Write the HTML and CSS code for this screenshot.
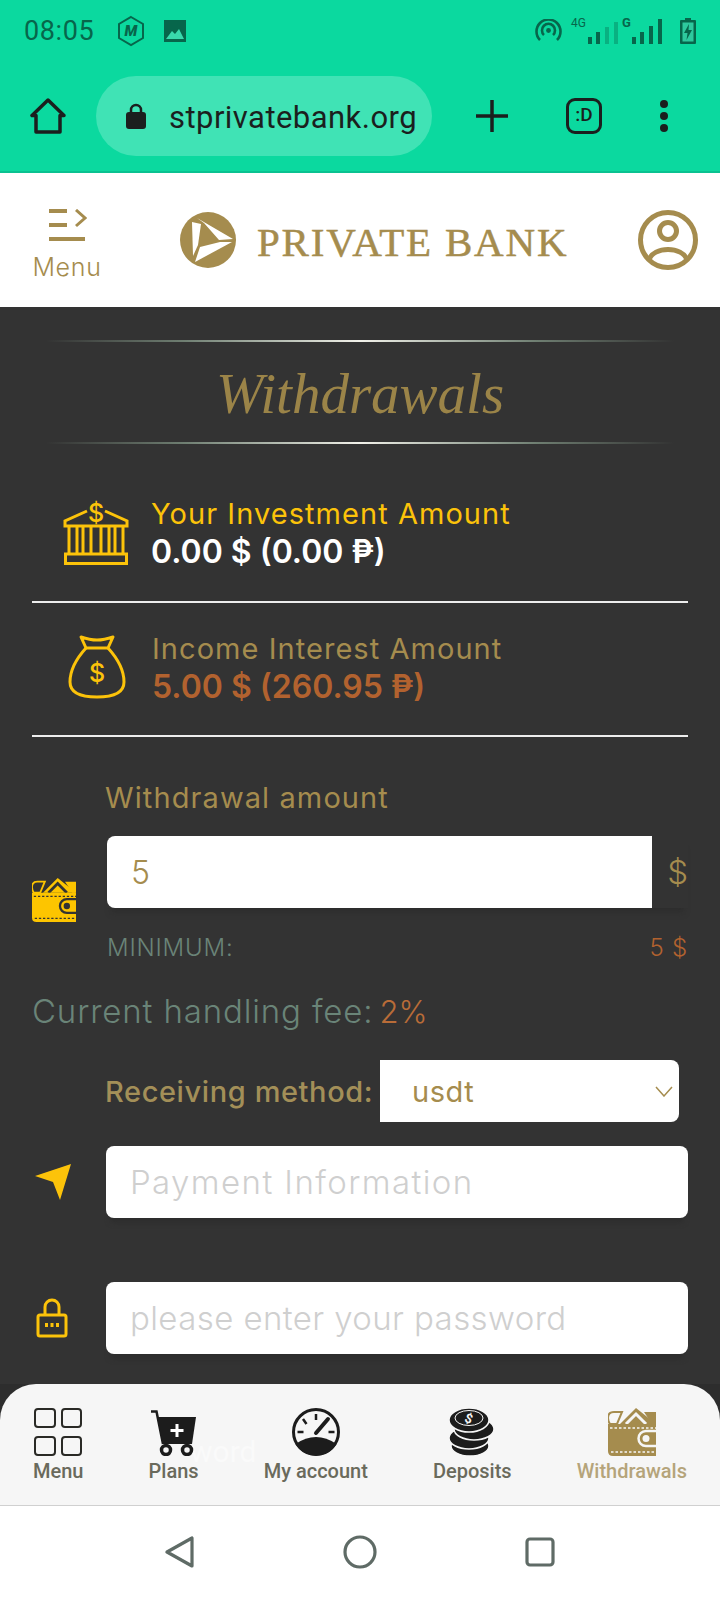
FILE: index.html
```html
<!DOCTYPE html>
<html lang="en">
<head>
    <meta charset="UTF-8">
    <meta name="viewport" content="width=device-width, initial-scale=1.0">
    <title>Withdrawals</title>
    <link rel="stylesheet" href="styles.css">
</head>
<body>
    <svg class="sprite" width="0" height="0">
        <symbol id="wallet" viewBox="0 0 48 48">
            <path d="M2 16 Q0 13 0 10 Q0 4 6 4 H14 L9 16 Z" fill="none" stroke="currentColor" stroke-width="2"/>
            <path d="M12 16 L28 0 L48 16 Z" fill="currentColor"/>
            <path d="M18 16 L28 6 L38 16" fill="none" class="wallet-cut" stroke-width="3"/>
            <path d="M36 4 H48 V16 H44 Z" fill="currentColor"/>
            <path d="M0 16 H48 V48 H5 Q0 48 0 43 Z" fill="currentColor"/>
            <path d="M2 20 H48 M3 44 H48" fill="none" class="wallet-cut" stroke-width="1.5" stroke-dasharray="2.5 2"/>
            <path d="M48 23 H38 A7.5 7.5 0 0 0 38 38 H48" fill="none" class="wallet-cut" stroke-width="2.5"/>
            <circle cx="38" cy="30.5" r="3.5" class="wallet-dot"/>
        </symbol>
    </svg>

    <header class="chrome">
        <div class="status">
            <span class="clock">08:05</span>
            <span class="hex">
                <svg width="28" height="32" viewBox="0 0 28 32"><path d="M14 2 L26 9 V23 L14 30 L2 23 V9 Z" fill="none" stroke="#07664b" stroke-width="2"/></svg>
                <b>M</b>
            </span>
            <svg class="pic" width="22" height="22" viewBox="0 0 22 22"><rect width="22" height="22" fill="#07664b"/><path d="M2 19 L8 11 L11 14 L15 9 L20 19 Z" fill="#39d9ac"/></svg>
            <div class="status-right">
                <svg width="27" height="23" viewBox="0 0 27 23" fill="none" stroke="#07664b" stroke-width="2.6"><path d="M5 21 A12 12 0 1 1 22 21"/><path d="M9 16 A6.5 6.5 0 1 1 18 16"/><circle cx="13.5" cy="11.5" r="2.4" fill="#07664b" stroke="none"/></svg>
                <span class="signal">
                    <i class="net">4G</i>
                    <svg width="34" height="26" viewBox="0 0 34 26" fill="#07664b"><rect x="0" y="18" width="4" height="7"/><rect x="8" y="13" width="4" height="12"/><rect x="17" y="8" width="4" height="17" opacity=".35"/><rect x="26" y="3" width="4" height="22" opacity=".35"/></svg>
                    <i class="net net-g">G</i>
                    <svg width="34" height="26" viewBox="0 0 34 26" fill="#07664b"><rect x="0" y="18" width="4" height="7"/><rect x="8" y="13" width="4" height="12"/><rect x="17" y="7" width="4" height="18"/><rect x="26" y="0" width="4" height="25"/></svg>
                </span>
                <svg width="16" height="26" viewBox="0 0 16 26"><path d="M5 0 H11 V2 H15 Q16 2 16 3 V25 Q16 26 15 26 H1 Q0 26 0 25 V3 Q0 2 1 2 H5 Z" fill="#07664b"/><rect x="2.500" y="4.500" width="11" height="19" fill="#2ec99e"/><path d="M9 6 L4 15 H7.500 L6.500 22 L12 12 H8.500 Z" fill="#07664b"/></svg>
            </div>
        </div>
        <div class="toolbar">
            <svg class="home" width="36" height="36" viewBox="0 0 36 36" fill="none" stroke="#1b1f1e" stroke-width="3.500" stroke-linejoin="round"><path d="M18 2 L2 17.500 H6 V34 H30 V17.500 H34 Z"/></svg>
            <div class="url">
                <svg width="20" height="26" viewBox="0 0 20 26"><path d="M5 10 V7 A5 5 0 0 1 15 7 V10" fill="none" stroke="#1b1f1e" stroke-width="2.500"/><rect y="9" width="20" height="17" rx="3" fill="#1b1f1e"/></svg>
                <span>stprivatebank.org</span>
            </div>
            <svg class="plus" width="32" height="32" viewBox="0 0 32 32" stroke="#1b1f1e" stroke-width="3.500"><path d="M0 16 H32 M16 0 V32"/></svg>
            <span class="tabs">:D</span>
            <svg class="dots" width="10" height="34" viewBox="0 0 10 34" fill="#1b1f1e"><circle cx="5" cy="5" r="4"/><circle cx="5" cy="17" r="4"/><circle cx="5" cy="29" r="4"/></svg>
        </div>
    </header>

    <header class="site-head">
        <div class="menu-btn">
            <svg width="40" height="34" viewBox="0 0 40 34" fill="#a58c4e"><rect x="2" width="18" height="4"/><rect x="2" y="14" width="18" height="4"/><rect x="2" y="28" width="36" height="4"/><path d="M29 1 L38 9 L29 17" fill="none" stroke="#a58c4e" stroke-width="3"/></svg>
            <span>Menu</span>
        </div>
        <div class="logo">
            <svg width="56" height="56" viewBox="0 0 56 56"><circle cx="28" cy="28" r="28" fill="#a58c4e"/><path d="M17 6 L53 27 L39 28 L24 11 Z" fill="#fff"/><path d="M12 10 L21 12 L18 33 L13 44 Z" fill="#fff"/><path d="M15 50 L20 35 L40 30 L52 30 Z" fill="#fff"/></svg>
            <span>PRIVATE BANK</span>
        </div>
        <svg class="user" width="60" height="60" viewBox="0 0 60 60" fill="none" stroke="#a58c4e" stroke-width="5"><circle cx="30" cy="30" r="27.500"/><circle cx="30" cy="21" r="8.500"/><path d="M11 50 C15 36 45 36 49 50"/></svg>
    </header>

    <main class="content">
        <div class="rule"></div>
        <h1 class="title">Withdrawals</h1>
        <div class="rule"></div>

        <section class="stats">
            <div class="stat stat-first">
                <svg class="stat-icon" width="64" height="64" viewBox="0 0 64 64" fill="none" stroke="#fcc30a" stroke-width="3">
                    <path d="M23 10 L1 20 V25 H63 V20 L41 10"/>
                    <path d="M5 25 V53 M13 25 V53 M19 25 V53 M27 25 V53 M37 25 V53 M45 25 V53 M51 25 V53 M59 25 V53"/>
                    <path d="M1.500 53 H62.500 V62.500 H1.500 Z"/>
                    <text x="32" y="21" text-anchor="middle" class="icon-dollar">$</text>
                </svg>
                <div>
                    <p class="stat-label yellow">Your Investment Amount</p>
                    <p class="stat-value white">0.00 $ (0.00 ₱)</p>
                </div>
            </div>
            <div class="stat stat-second">
                <svg class="stat-icon bag" width="58" height="64" viewBox="0 0 58 64" fill="none" stroke="#fcc30a" stroke-width="3" stroke-linejoin="round">
                    <path d="M13 2 Q22 5 29 5 Q36 5 45 2 L40 13 H18 Z"/>
                    <path d="M18 13 C8 24 2 36 2 47 C2 58 12 62 29 62 C46 62 56 58 56 47 C56 36 50 24 40 13"/>
                    <text x="29" y="47" text-anchor="middle" class="icon-dollar">$</text>
                </svg>
                <div>
                    <p class="stat-label gold">Income Interest Amount</p>
                    <p class="stat-value rust">5.00 $ (260.95 ₱)</p>
                </div>
            </div>
        </section>

        <form class="form">
            <label class="field-label" for="amount">Withdrawal amount</label>
            <div class="amount-row">
                <svg class="wallet-small" width="44" height="44"><use href="#wallet"/></svg>
                <div class="amount-box">
                    <input class="amount-input" id="amount" type="text" value="5">
                    <span class="addon">$</span>
                </div>
            </div>
            <div class="min-row">
                <span>MINIMUM:</span>
                <span class="rust">5 $</span>
            </div>
            <p class="fee">Current handling fee: <span class="rust">2%</span></p>
            <div class="method-row">
                <label for="method">Receiving method:</label>
                <div class="select-wrap">
                    <select id="method"><option>usdt</option></select>
                    <svg width="18" height="11" viewBox="0 0 18 11" fill="none" stroke="#a58c4e" stroke-width="1.500"><path d="M1 1 L9 10 L17 1"/></svg>
                </div>
            </div>
            <div class="input-row">
                <span class="input-icon">
                    <svg width="36" height="36" viewBox="0 0 36 36" fill="#fcc30a"><path d="M36 0 L0 12 L18 18 L25 36 Z"/></svg>
                </span>
                <input class="text-input input-payment" type="text" placeholder="Payment Information">
            </div>
            <div class="input-row row-password">
                <span class="input-icon">
                    <svg width="34" height="40" viewBox="0 0 34 40" fill="none" stroke="#fcc30a" stroke-width="3"><path d="M10 17 V9 A7 7 0 0 1 24 9 V17"/><rect x="3" y="17" width="28" height="21" rx="2"/><path d="M10 27 H24" stroke-width="4" stroke-dasharray="3 2.500"/></svg>
                </span>
                <input class="text-input input-password" type="password" placeholder="please enter your password">
            </div>
        </form>
    </main>

    <div class="tabbar-wrap">
        <nav class="tabbar">
            <span class="ghost">word</span>
            <a class="tab">
                <svg width="48" height="48" viewBox="0 0 48 48" fill="none" stroke="#2a2a26" stroke-width="2"><rect x="1" y="1" width="20" height="18" rx="3"/><rect x="28" y="1" width="19" height="18" rx="3"/><rect x="1" y="29" width="20" height="18" rx="3"/><rect x="28" y="29" width="19" height="18" rx="3"/></svg>
                <span>Menu</span>
            </a>
            <a class="tab">
                <svg width="48" height="48" viewBox="0 0 48 48">
                    <path d="M1 3.500 H6.500 L13 36" fill="none" stroke="#1c1c1c" stroke-width="2.500"/>
                    <path d="M7 9 H46 L42 36 H13 Z" fill="#1c1c1c"/>
                    <path d="M27 16 V29 M20.500 22.500 H33.500" stroke="#fff" stroke-width="3"/>
                    <circle cx="16" cy="42" r="4.500" fill="none" stroke="#1c1c1c" stroke-width="3.500"/>
                    <circle cx="37" cy="42" r="4.500" fill="none" stroke="#1c1c1c" stroke-width="3.500"/>
                </svg>
                <span>Plans</span>
            </a>
            <a class="tab">
                <svg width="48" height="48" viewBox="0 0 48 48" fill="none" stroke="#1c1c1c">
                    <circle cx="24" cy="24" r="22.500" stroke-width="3"/>
                    <path d="M3.500 36 Q24 22 44.500 36 A24 24 0 0 1 3.500 36 Z" fill="#1c1c1c" stroke="none"/>
                    <path d="M24 25 L36 11" stroke-width="4" stroke-linecap="round"/>
                    <path d="M24 6 V12 M11 11 L14.500 16 M5.500 24 H11.500 M36.500 24 H42.500" stroke-width="2.500"/>
                </svg>
                <span>My account</span>
            </a>
            <a class="tab">
                <svg class="coins" width="46" height="48" viewBox="0 0 46 48" fill="#1c1c1c" stroke="#f6f6f6" stroke-width="1.500">
                    <ellipse cx="21" cy="38" rx="19" ry="10"/>
                    <ellipse cx="20" cy="30" rx="20" ry="11"/>
                    <ellipse cx="25" cy="21" rx="20" ry="11"/>
                    <ellipse cx="20" cy="12" rx="20" ry="12"/>
                    <ellipse cx="20" cy="10" rx="14" ry="7.500" fill="none" stroke-width="1"/>
                    <text x="20" y="15" text-anchor="middle" class="coin-dollar" transform="rotate(20 20 10)">$</text>
                </svg>
                <span>Deposits</span>
            </a>
            <a class="tab tab-active">
                <svg class="wallet-gold" width="48" height="48"><use href="#wallet"/></svg>
                <span>Withdrawals</span>
            </a>
        </nav>
    </div>

    <div class="sysnav">
        <svg width="30" height="32" viewBox="0 0 30 32" fill="none" stroke="#5f6b66" stroke-width="3.200" stroke-linejoin="round"><path d="M27 2 V30 L2 16 Z"/></svg>
        <svg width="34" height="34" viewBox="0 0 34 34" fill="none" stroke="#5f6b66" stroke-width="3.200"><circle cx="17" cy="17" r="15"/></svg>
        <svg width="30" height="30" viewBox="0 0 30 30" fill="none" stroke="#5f6b66" stroke-width="3.200"><rect x="2" y="2" width="26" height="26" rx="3"/></svg>
    </div>
</body>
</html>
```
FILE: styles.css
```css
* {
    box-sizing: border-box;
}

html, body {
    margin: 0;
    padding: 0;
}

body {
    width: 720px;
    height: 1600px;
    overflow: hidden;
    display: flex;
    flex-direction: column;
    font-family: Inter, "Open Sans", sans-serif;
    background: #fff;
}

p, h1 {
    margin: 0;
}

.sprite {
    position: absolute;
}

/* browser chrome */
.chrome {
    height: 173px;
    flex: none;
    background: #0bd99f;
    border-bottom: 2px solid #0ac291;
    font-family: Roboto, sans-serif;
}

.status {
    height: 61px;
    display: flex;
    align-items: center;
    padding: 0 24px;
}

.clock {
    font-size: 27px;
    letter-spacing: 0.6px;
    color: #07664b;
    width: 93px;
}

.hex {
    position: relative;
    display: flex;
    width: 28px;
    height: 32px;
}

.hex b {
    position: absolute;
    inset: 0;
    text-align: center;
    font-size: 15px;
    font-weight: 900;
    font-style: italic;
    line-height: 32px;
    color: #07664b;
}

.pic {
    margin-left: 19px;
}

.status-right {
    margin-left: auto;
    display: flex;
    align-items: center;
    margin-right: 0;
}

.signal {
    display: flex;
    align-items: flex-end;
    margin: 0 14px 0 9px;
    height: 28px;
}

.net {
    font-style: normal;
    font-size: 12px;
    line-height: 12px;
    color: #07664b;
    align-self: flex-start;
    width: 17px;
}

.net-g {
    font-weight: 700;
    width: 10px;
    margin-left: 0;
    font-size: 13px;
}

.toolbar {
    height: 80px;
    margin-top: 15px;
    display: flex;
    align-items: center;
    padding-left: 30px;
}

.url {
    width: 336px;
    height: 80px;
    margin-left: 30px;
    background: #40e3b5;
    border-radius: 40px;
    display: flex;
    align-items: center;
    padding-left: 30px;
    font-size: 31px;
    color: #1b1f1e;
}

.url span {
    margin-left: 23px;
    letter-spacing: 0.45px;
    padding-top: 2px;
}

.plus {
    margin-left: 44px;
}

.tabs {
    width: 36px;
    height: 36px;
    margin-left: 58px;
    border: 3.500px solid #1b1f1e;
    border-radius: 9px;
    font-size: 19px;
    font-weight: 500;
    line-height: 28px;
    text-align: center;
    color: #1b1f1e;
}

.dots {
    margin-left: 57px;
}

/* site header */
.site-head {
    height: 134px;
    flex: none;
    display: flex;
    align-items: center;
    padding: 0 22px 0 33px;
    background: #fff;
}

.menu-btn {
    width: 68px;
    display: flex;
    flex-direction: column;
    align-items: center;
    gap: 10px;
    font-size: 25px;
    font-weight: 300;
    color: #a58c4e;
    line-height: 28px;
    letter-spacing: 0.7px;
    padding-top: 9px;
}

.logo {
    margin-left: 79px;
    display: flex;
    align-items: center;
    gap: 21px;
    font-family: "Liberation Serif", serif;
    font-size: 41px;
    color: #a58c4e;
    letter-spacing: 1.8px;
    -webkit-text-stroke: 0.5px #a58c4e;
}

.logo span {
    padding-top: 3px;
}

.user {
    margin-left: auto;
}

/* page */
.content {
    height: 1077px;
    flex: none;
    padding-top: 33px;
    overflow: hidden;
    background: #333;
}

.rule {
    height: 2px;
    margin: 0 46px;
    background: linear-gradient(90deg, #333 0%, #6f7f72 22%, #f2f2ea 50%, #6f7f72 78%, #333 100%);
}

.title {
    height: 100px;
    font-family: "Liberation Serif", serif;
    font-style: italic;
    font-weight: 400;
    font-size: 57px;
    line-height: 104px;
    text-align: center;
    color: #9b8448;
}

.stats {
    margin: 48px 32px 0;
}

.stat {
    display: flex;
    align-items: center;
    padding-left: 32px;
    gap: 24px;
    border-bottom: 2px solid #eee;
}

.stat-first {
    height: 111px;
    padding-bottom: 27px;
}

.stat-second {
    height: 134px;
    padding-bottom: 3px;
}

.stat-second .stat-icon {
    margin-bottom: 1px;
}

.stat-icon {
    flex: none;
    overflow: visible;
}

.bag {
    margin: 0 3px 0 4px;
    width: 58px;
    flex: none;
}

.icon-dollar {
    font-size: 25px;
    font-weight: 500;
    fill: #fcc30a;
    stroke: none;
}

.stat-label {
    font-size: 29px;
    line-height: 37px;
    letter-spacing: 1.05px;
    margin-left: -1px;
}

.stat-value {
    font-size: 32px;
    font-weight: 600;
    line-height: 39px;
    margin-left: -1px;
}

.yellow {
    color: #fcc30a;
}

.white {
    color: #fff;
}

.gold {
    color: #a58c4e;
}

.rust {
    color: #b2622f;
}

.form {
    padding: 47px 32px 0;
}

.field-label {
    display: block;
    height: 26px;
    line-height: 28px;
    margin: 0 0 26px 73px;
    font-size: 29px;
    letter-spacing: 1.1px;
    color: #a58c4e;
}

.amount-row {
    display: flex;
    align-items: flex-start;
}

.wallet-small {
    flex: none;
    margin: 42px 0 -14px;
    color: #fdc500;
    --cut: #333;
}

.wallet-cut {
    stroke: var(--cut);
}

.wallet-dot {
    fill: var(--cut);
}

.amount-box {
    display: flex;
    margin-left: 31px;
    flex: 1;
    box-shadow: 0 9px 5px -4px #2e2e2e;
}

.amount-input {
    width: 545px;
    height: 72px;
    border: 0;
    border-radius: 8px 0 0 8px;
    padding: 0 24px;
    background: #fff;
    font: 300 32px Inter, sans-serif;
    color: #a58c4e;
    outline: none;
}

.addon {
    flex: 1;
    text-align: right;
    font-size: 33px;
    font-weight: 300;
    line-height: 72px;
    color: #a58c4e;
}

.min-row {
    display: flex;
    justify-content: space-between;
    margin: 28px 0 0 75px;
    font-size: 24px;
    font-weight: 300;
    line-height: 24px;
    letter-spacing: 0.8px;
    color: #6a8478;
}

.fee {
    margin-top: 33px;
    font-size: 33px;
    font-weight: 300;
    line-height: 36px;
    letter-spacing: 0.85px;
    color: #6a8478;
}

.fee .rust {
    margin-left: -4px;
    font-size: 31px;
    letter-spacing: 0;
    color: #b96c38;
}

.method-row {
    display: flex;
    align-items: center;
    margin: 30px 0 0 73px;
    font-size: 29px;
    font-weight: 500;
    letter-spacing: 0.6px;
    color: #a38f58;
}

.method-row label {
    width: 275px;
    white-space: nowrap;
}

.select-wrap {
    position: relative;
    width: 299px;
    height: 62px;
}

.select-wrap select {
    width: 100%;
    height: 100%;
    border: 0;
    border-radius: 0 8px 8px 0;
    background: #fff;
    appearance: none;
    padding-left: 32px;
    font: 400 29px Inter, sans-serif;
    letter-spacing: 0.5px;
    color: #a58c4e;
}

.select-wrap svg {
    position: absolute;
    right: 6px;
    top: 26px;
}

.input-row {
    display: flex;
    align-items: center;
    margin-top: 24px;
}

.row-password {
    margin-top: 64px;
}

.input-icon {
    width: 74px;
    flex: none;
    display: flex;
    padding-left: 3px;
}

.text-input {
    flex: 1;
    height: 72px;
    border: 0;
    border-radius: 8px;
    padding: 0 24px;
    background: #fff;
    font: 300 33px Inter, sans-serif;
    box-shadow: 0 9px 5px -4px #2e2e2e;
    outline: none;
}

.input-payment {
    letter-spacing: 1.4px;
}

.input-password {
    letter-spacing: 0.4px;
}

.text-input::placeholder {
    color: #cfcfcf;
}

/* bottom tabs */
.tabbar-wrap {
    flex: none;
    background: #2d2d2d;
}

.tabbar {
    position: relative;
    height: 122px;
    display: flex;
    justify-content: space-between;
    padding: 24px 33px 0;
    background: #f6f6f6;
    border-radius: 36px 36px 0 0;
    border-bottom: 1px solid #d0d0d0;
    font-family: Roboto, sans-serif;
}

.ghost {
    position: absolute;
    left: 190px;
    top: 50px;
    font-size: 30px;
    color: #fafafa;
}

.tab {
    position: relative;
    display: flex;
    flex-direction: column;
    align-items: center;
    gap: 3px;
    font-size: 20px;
    font-weight: 500;
    line-height: 24px;
    color: #6a6a5c;
}

.tab-active {
    color: #b5a47a;
}

.wallet-gold {
    color: #a58c4e;
    --cut: #f6f6f6;
}

.coins {
    overflow: visible;
}

.coin-dollar {
    font-family: Roboto, sans-serif;
    font-size: 13px;
    font-weight: 700;
    fill: #f6f6f6;
    stroke: none;
}

/* android nav */
.sysnav {
    flex: 1;
    display: flex;
    align-items: center;
    justify-content: center;
    gap: 148px;
    padding-bottom: 2px;
    background: #fff;
}
```
